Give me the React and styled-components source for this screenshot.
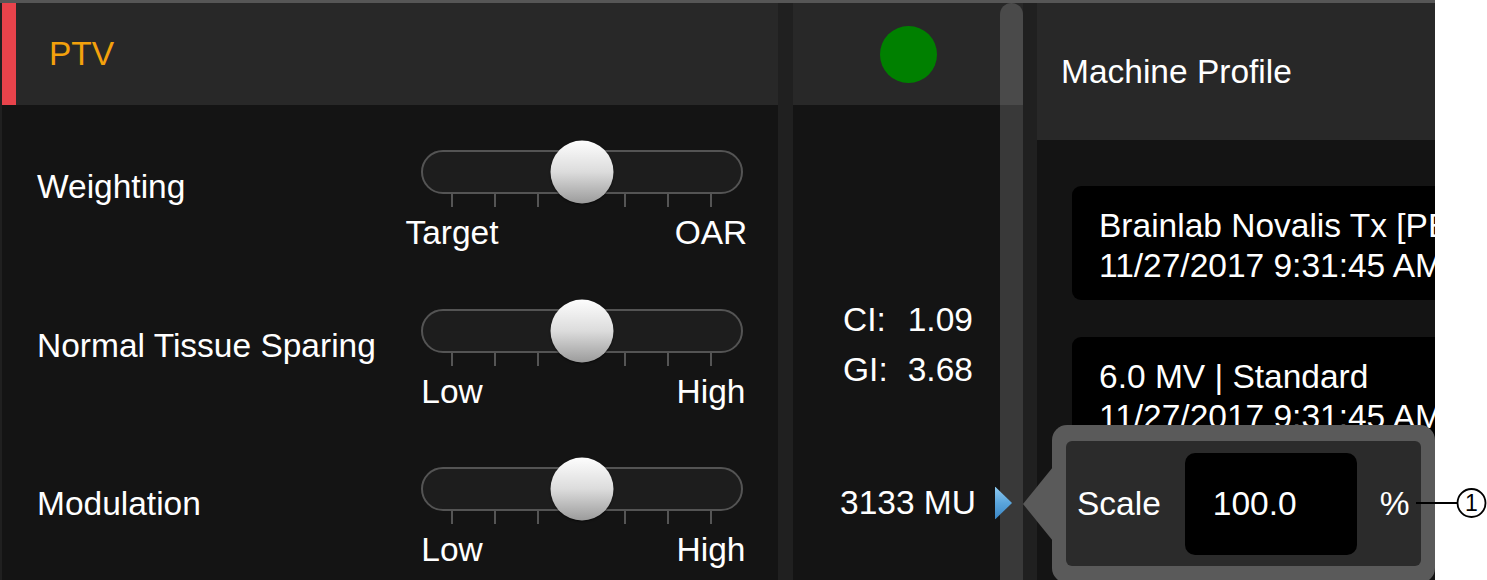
import styled, { createGlobalStyle } from "styled-components";

const GlobalStyle = createGlobalStyle`
  html, body {
    margin: 0;
    padding: 0;
    background: #ffffff;
  }
  body {
    font-family: "Liberation Sans", Arial, sans-serif;
  }
`;

const Page = styled.div`
  position: relative;
  width: 1487px;
  height: 580px;
  overflow: hidden;
  background: #ffffff;
`;

const Frame = styled.div`
  position: relative;
  width: 1435px;
  height: 580px;
  box-sizing: border-box;
  border-top: 3px solid #565656;
  padding-left: 2px;
  background: #202020;
  display: flex;
  overflow: hidden;
  color: #ffffff;
  font-size: 33.5px;
`;

const Panel = styled.div`
  position: relative;
  display: flex;
  flex-direction: column;
  flex-shrink: 0;
  width: ${(p) => p.$width}px;
  margin-right: ${(p) => p.$gap || 0}px;
  background: #141414;
  overflow: hidden;
`;

const Header = styled.div`
  height: ${(p) => p.$height}px;
  flex-shrink: 0;
  display: flex;
  align-items: center;
  justify-content: ${(p) => (p.$center ? "center" : "flex-start")};
  box-sizing: border-box;
  padding-left: ${(p) => p.$pad || 0}px;
  background: #282828;
  border-left: ${(p) => (p.$accent ? `14px solid ${p.$accent}` : "none")};
  line-height: 1;
`;

const StructureName = styled.span`
  color: #f3a10c;
`;

const StatusDot = styled.div`
  width: 57px;
  height: 57px;
  border-radius: 50%;
  background: #008000;
`;

/* ---------- left panel: sliders ---------- */

const SliderRow = styled.div`
  height: 158.5px;
  flex-shrink: 0;
  display: grid;
  grid-template-columns: 384px 322px;
  align-items: start;
  padding-left: 35px;
`;

const RowLabel = styled.div`
  margin-top: 65px;
  line-height: 1;
  white-space: nowrap;
`;

const SliderBlock = styled.div`
  margin-top: 45px;
  width: 322px;
`;

const Track = styled.div`
  position: relative;
  height: 44px;
  box-sizing: border-box;
  border: 2px solid #545454;
  border-radius: 22px;
  background: #1d1d1d;
`;

const Thumb = styled.div`
  position: absolute;
  left: ${(p) => p.$pos}%;
  top: 50%;
  width: 63px;
  height: 63px;
  transform: translate(-50%, -50%);
  border-radius: 50%;
  background: linear-gradient(180deg, #fdfdfd 0%, #dcdcdc 50%, #9b9b9b 100%);
  box-shadow: 0 1px 2px rgba(0, 0, 0, 0.6);
`;

const Ticks = styled.div`
  display: flex;
  justify-content: space-between;
  padding: 0 31px 0 30px;
  height: 13px;
`;

const Tick = styled.div`
  width: 2px;
  height: 13px;
  background: ${(p) => (p.$hidden ? "transparent" : "#555555")};
`;

const TickLabels = styled.div`
  display: flex;
  justify-content: space-between;
  margin: 9px -18px 0 -19px;
  line-height: 1;
`;

const TickLabel = styled.span`
  width: 100px;
  text-align: center;
`;

/* ---------- middle panel: indices ---------- */

const MidBody = styled.div`
  display: flex;
  flex-direction: column;
  align-items: center;
  padding-top: 190px;
`;

const Stats = styled.div`
  display: grid;
  grid-template-columns: auto auto;
  column-gap: 20px;
  line-height: 50px;
`;

const MuRow = styled.div`
  position: relative;
  width: 100%;
  margin-top: 83px;
  line-height: 50px;
  text-align: center;
`;

const Pointer = styled.div`
  position: absolute;
  right: 11px;
  top: 50%;
  width: 17px;
  height: 33px;
  transform: translateY(-50%);
  clip-path: polygon(0 0, 100% 50%, 0 100%);
  background: linear-gradient(180deg, #8fcaf0 0%, #5aa5dc 50%, #3a86c4 100%);
`;

const Scrollbar = styled.div`
  position: absolute;
  top: 0;
  right: 0;
  bottom: 0;
  width: 23px;
  border-radius: 12px 12px 0 0;
  background: rgba(255, 255, 255, 0.16);
`;

/* ---------- right panel: machine profile ---------- */

const CardList = styled.div`
  display: flex;
  flex-direction: column;
  gap: 37px;
  padding: 46px 0 0 35px;
`;

const Card = styled.div`
  width: 520px;
  box-sizing: border-box;
  padding: 20px 0 14px 27px;
  border-radius: 9px;
  background: #000000;
  line-height: 40px;
  white-space: nowrap;
`;

/* ---------- scale popover ---------- */

const Popover = styled.div`
  position: absolute;
  left: 1023px;
  right: 0;
  top: 422px;
  height: 158px;
  display: flex;
  align-items: center;
`;

const PopoverArrow = styled.div`
  width: 30px;
  height: 74px;
  flex-shrink: 0;
  margin-right: -1px;
  background: #5a5a5a;
  clip-path: polygon(0 50%, 100% 0, 100% 100%);
`;

const PopoverBox = styled.div`
  flex: 1;
  height: 100%;
  box-sizing: border-box;
  padding: 16px 14px 17px 14px;
  border-radius: 15px;
  background: #5a5a5a;
`;

const PopoverInner = styled.div`
  height: 100%;
  display: flex;
  align-items: center;
  padding-left: 11px;
  border-radius: 6px;
  background: #2b2b2b;
  line-height: 1;
`;

const ScaleInput = styled.div`
  width: 172px;
  height: 102px;
  box-sizing: border-box;
  margin: 0 23px 0 24px;
  padding-left: 28px;
  display: flex;
  align-items: center;
  border-radius: 10px;
  background: #000000;
`;

const Callout = styled.svg`
  position: absolute;
  left: 1414px;
  top: 486px;
  overflow: visible;
`;

const sliders = [
  { label: "Weighting", low: "Target", high: "OAR", pos: 50 },
  { label: "Normal Tissue Sparing", low: "Low", high: "High", pos: 50 },
  { label: "Modulation", low: "Low", high: "High", pos: 50 },
];

const Slider = ({ label, low, high, pos }) => (
  <SliderRow>
    <RowLabel>{label}</RowLabel>
    <SliderBlock>
      <Track>
        <Thumb $pos={pos} />
      </Track>
      <Ticks>
        {[0, 1, 2, 3, 4, 5, 6].map((i) => (
          <Tick key={i} $hidden={i === 3} />
        ))}
      </Ticks>
      <TickLabels>
        <TickLabel>{low}</TickLabel>
        <TickLabel>{high}</TickLabel>
      </TickLabels>
    </SliderBlock>
  </SliderRow>
);

export default function App() {
  return (
    <Page>
      <GlobalStyle />
      <Frame>
        <Panel $width={776} $gap={15}>
          <Header $height={102} $pad={33} $accent="#e8434b">
            <StructureName>PTV</StructureName>
          </Header>
          {sliders.map((s) => (
            <Slider key={s.label} {...s} />
          ))}
        </Panel>

        <Panel $width={230} $gap={14}>
          <Scrollbar />
          <Header $height={102} $center>
            <StatusDot />
          </Header>
          <MidBody>
            <Stats>
              <span>CI:</span>
              <span>1.09</span>
              <span>GI:</span>
              <span>3.68</span>
            </Stats>
            <MuRow>
              3133 MU
              <Pointer />
            </MuRow>
          </MidBody>
        </Panel>

        <Panel $width={398}>
          <Header $height={137} $pad={24}>
            Machine Profile
          </Header>
          <CardList>
            <Card>
              Brainlab Novalis Tx [PE]
              <br />
              11/27/2017 9:31:45 AM
            </Card>
            <Card>
              6.0 MV | Standard
              <br />
              11/27/2017 9:31:45 AM
            </Card>
          </CardList>
        </Panel>

        <Popover>
          <PopoverArrow />
          <PopoverBox>
            <PopoverInner>
              <span>Scale</span>
              <ScaleInput>100.0</ScaleInput>
              <span>%</span>
            </PopoverInner>
          </PopoverBox>
        </Popover>
      </Frame>

      <Callout width="73" height="34" viewBox="0 0 73 34">
        <line x1="2" y1="17" x2="43" y2="17" stroke="#000" strokeWidth="2" />
        <circle cx="57.5" cy="17" r="14" fill="#fff" stroke="#000" strokeWidth="1.8" />
        <text
          x="57.5"
          y="25"
          textAnchor="middle"
          fontFamily="Liberation Sans, Arial, sans-serif"
          fontSize="23"
          fill="#000"
        >
          1
        </text>
      </Callout>
    </Page>
  );
}
